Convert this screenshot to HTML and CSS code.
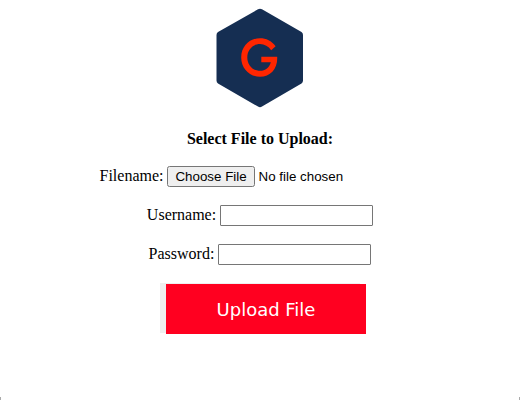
FILE: index.html
```html
<!DOCTYPE html>
<html lang="en">
<head>
<meta charset="utf-8">
<title>Upload File</title>
<link rel="stylesheet" href="styles.css">
</head>
<body>
<form class="upload">
<svg class="logo" viewBox="0 0 88 100" aria-hidden="true">
<path fill="#152e52" d="M42 1.3Q44 .1 46 1.3L85.5 24.1Q87 25 87 27V72.5Q87 74.4 85.5 75.4L46 98.6Q44 99.8 42 98.6L2 75.4Q.5 74.4.5 72.5V27Q.5 25 2 24.1Z"/>
<path fill="#ff2600" d="M59.6 38.2C55.5 32.8 50.2 30.2 44 30.2C33.5 30.2 25.2 38.5 25.2 49.4S33.5 68.7 44 68.7C54.5 68.7 61.8 60.5 61.2 48.8H45.3V54.2H54.8C53.6 59.3 49.4 62.8 44 62.8C36.8 62.8 31.3 57 31.3 49.4S36.8 36.1 44 36.1C48.5 36.1 52.4 38.4 55.2 42.2Z"/>
</svg>
<h1 class="title">Select File to Upload:</h1>
<div class="row file-row"><label for="file">Filename:</label><input id="file" type="file"></div>
<div class="row user-row"><label for="user">Username:</label><input class="field" id="user" type="text"></div>
<div class="row pass-row"><label for="pass">Password:</label><input class="field" id="pass" type="password"></div>
<button class="submit" type="button"><span class="submit-face">Upload File</span></button>
</form>
<div class="window-corners"></div>
</body>
</html>
```
FILE: styles.css
```css
body {
  margin: 0;
  background: #fff;
  color: #000;
  font: 16px "Liberation Serif", serif;
}
.upload {
  display: flex;
  flex-direction: column;
  align-items: center;
  padding-top: 8px;
}
.logo {
  width: 88px;
  height: 100px;
}
.title {
  margin: 21px 0 0;
  font-size: 16px;
  line-height: 20px;
}
.row {
  display: flex;
  align-items: center;
  gap: 4px;
  height: 21px;
}
.row label {
  padding-bottom: 2px;
}
.file-row {
  margin-top: 17px;
}
.user-row,
.pass-row {
  margin-top: 18px;
}
input {
  font: 13.333px "Liberation Sans", sans-serif;
}
.field {
  box-sizing: border-box;
  width: 153px;
  height: 21px;
  padding: 1px 2px;
  border: 1px solid #767676;
  border-radius: 1px;
}
.submit {
  display: flex;
  width: 200px;
  height: 51px;
  margin-top: 18px;
  padding: 1px 0 0 6px;
  border: 0;
  background: linear-gradient(#efefef, #efefef) 0 0 / 200px 50px no-repeat;
  color: #fff;
  font: 18px "DejaVu Sans", sans-serif;
}
.submit-face {
  flex: none;
  width: 200px;
  height: 50px;
  background: #ff0020;
  line-height: 51px;
}
/* Rounded lower corners of the window frame */
.window-corners {
  position: fixed;
  bottom: 0;
  left: 0;
  box-sizing: border-box;
  width: 100%;
  height: 3px;
  border: solid #aaa;
  border-width: 0 1px;
}
```
